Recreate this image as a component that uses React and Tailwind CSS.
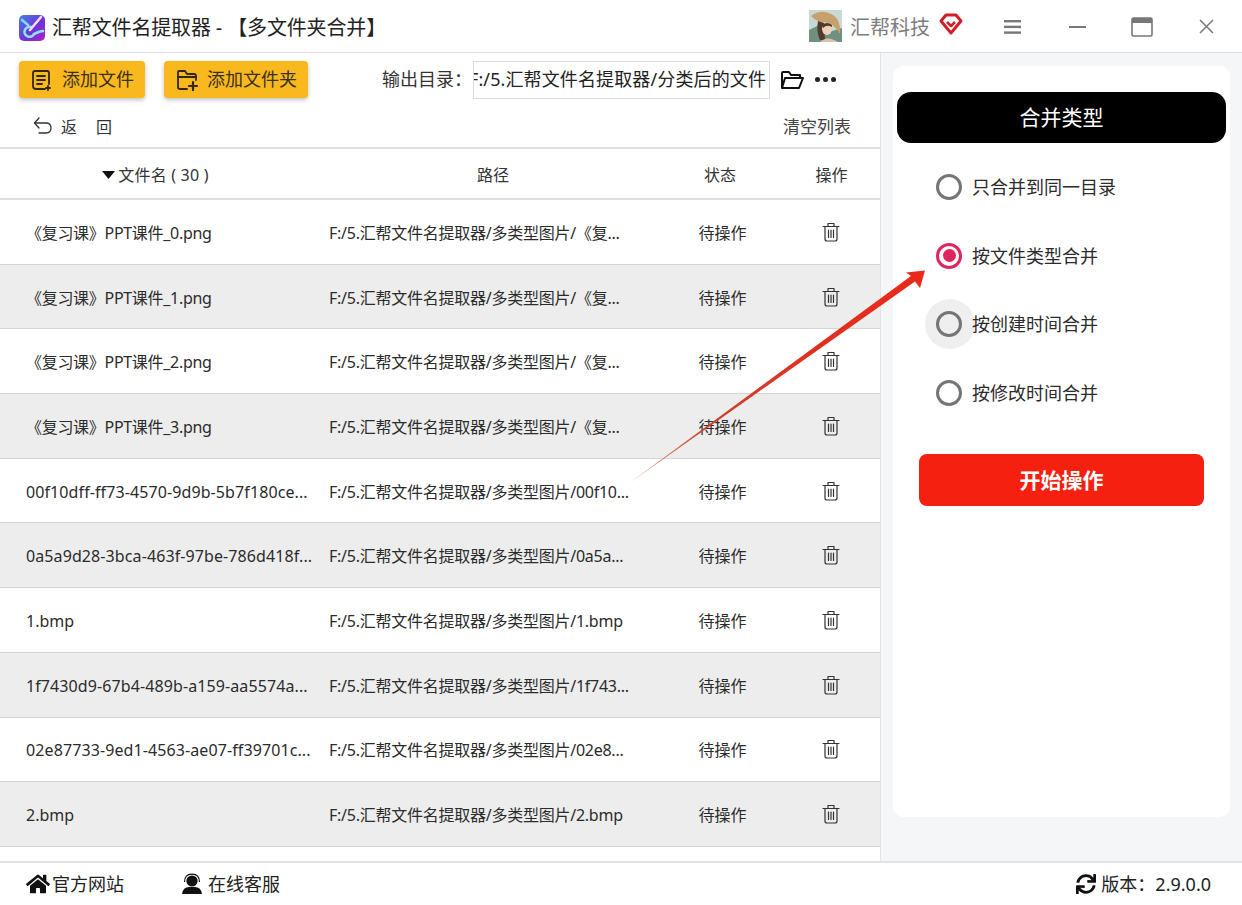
import React from "react";
import { FaHome, FaSync } from "react-icons/fa";

const rows = [
  ["《复习课》PPT课件_0.png", "F:/5.汇帮文件名提取器/多类型图片/《复...", "tracking-[-0.3px]"],
  ["《复习课》PPT课件_1.png", "F:/5.汇帮文件名提取器/多类型图片/《复...", "tracking-[-0.3px]"],
  ["《复习课》PPT课件_2.png", "F:/5.汇帮文件名提取器/多类型图片/《复...", "tracking-[-0.3px]"],
  ["《复习课》PPT课件_3.png", "F:/5.汇帮文件名提取器/多类型图片/《复...", "tracking-[-0.3px]"],
  ["00f10dff-ff73-4570-9d9b-5b7f180ce...", "F:/5.汇帮文件名提取器/多类型图片/00f10...", "tracking-[0.1px]"],
  ["0a5a9d28-3bca-463f-97be-786d418f...", "F:/5.汇帮文件名提取器/多类型图片/0a5a...", "tracking-[0.1px]"],
  ["1.bmp", "F:/5.汇帮文件名提取器/多类型图片/1.bmp", "tracking-normal"],
  ["1f7430d9-67b4-489b-a159-aa5574a...", "F:/5.汇帮文件名提取器/多类型图片/1f743...", "tracking-[0.1px]"],
  ["02e87733-9ed1-4563-ae07-ff39701c...", "F:/5.汇帮文件名提取器/多类型图片/02e8...", "tracking-[0.1px]"],
  ["2.bmp", "F:/5.汇帮文件名提取器/多类型图片/2.bmp", "tracking-normal"],
];

function Logo() {
  return (
    <svg width="26" height="26" viewBox="0 0 26 26">
      <defs>
        <linearGradient id="lg" x1="0" y1="0" x2="1" y2="1">
          <stop offset="0" stopColor="#4d7fe6" />
          <stop offset="0.55" stopColor="#6a35d8" />
          <stop offset="1" stopColor="#b022c8" />
        </linearGradient>
      </defs>
      <rect width="26" height="26" rx="5" fill="url(#lg)" />
      <path d="M12 12 a5 5 0 1 0 3 7 c3 -1 5 -3 9 -3" fill="none" stroke="#8fe3f5" strokeWidth="2.6" strokeLinecap="round" />
      <path d="M11 15 L22 2" stroke="#f6d8f0" strokeWidth="2.6" strokeLinecap="round" />
      <path d="M3 5 L9 10" stroke="#7fd8f2" strokeWidth="2.6" strokeLinecap="round" />
    </svg>
  );
}

function Avatar() {
  return (
    <svg width="33" height="32" viewBox="0 0 33 32">
      <rect width="33" height="32" fill="#c8d8d6" />
      <path d="M0 20 L10 15 L20 22 L33 18 V32 H0Z" fill="#70907f" />
      <path d="M2 6 Q12 -2 24 5 Q32 10 31 24 Q24 12 14 12 Q8 12 2 6Z" fill="#c9a06c" />
      <path d="M9 11 Q7 22 11 30 H16 L15 13Z" fill="#4f3a2c" />
      <ellipse cx="18" cy="19" rx="5" ry="6" fill="#edd0bb" />
      <path d="M13 15 Q18 11 23 15 L23 17 Q18 14 14 18Z" fill="#4f3a2c" />
      <path d="M11 32 Q18 25 29 32Z" fill="#dcc0aa" />
    </svg>
  );
}

function Trash() {
  return (
    <svg width="18" height="20" viewBox="0 0 18 20" fill="none" stroke="#333" strokeWidth="1.2" strokeLinecap="round" strokeLinejoin="round">
      <path d="M1 4.5 H17" />
      <path d="M6 4.5 V1.5 H12 V4.5" />
      <path d="M3 4.5 V17 Q3 19 5 19 H13 Q15 19 15 17 V4.5" />
      <path d="M6.5 8 V15.5 M9 8 V15.5 M11.5 8 V15.5" />
    </svg>
  );
}

function Radio({ label, checked }) {
  return (
    <div className="flex items-center h-[50px] pl-[39px]">
      <span className={`w-[26px] h-[26px] rounded-full border-[3px] flex items-center justify-center shrink-0 ${checked ? "border-[#e0245e]" : "border-[#757575]"}`}>
        {checked && <span className="w-[13px] h-[13px] rounded-full bg-[#e0245e]" />}
      </span>
      <span className="ml-[10px] pt-[1px] text-[18px] text-[#2b2b2b]">{label}</span>
    </div>
  );
}

export default function App() {
  return (
    <div className="relative w-[1242px] h-[905px] overflow-hidden bg-white flex flex-col text-[#222]" style={{ fontFamily: '"Noto Sans", "Noto Sans CJK SC", sans-serif' }}>
      {/* title bar */}
      <header className="h-[53px] shrink-0 flex items-center border-b border-[#dddddf] pl-[19px]">
        <div className="flex items-center mt-[3px]">
          <Logo />
          <span className="ml-[7px] text-[20px] tracking-[-0.15px] text-[#222]">汇帮文件名提取器 - 【多文件夹合并】</span>
        </div>
        <div className="ml-auto flex items-center h-full">
          <Avatar />
          <span className="ml-[8px] mt-[3px] text-[20px] text-[#7d7d7d]">汇帮科技</span>
          <svg className="ml-[9px] -mt-[5px]" width="24" height="24" viewBox="0 0 24 24" fill="none" stroke="#cf2027" strokeWidth="3" strokeLinejoin="round">
            <path d="M7 3 H17 L22 9 L12 21 L2 9Z" />
            <path d="M8 10 L12 14 L16 10" strokeWidth="2.6" />
          </svg>
          <svg className="ml-[41px] mt-[1px]" width="18" height="16" viewBox="0 0 18 16" fill="#777">
            <rect y="1" width="17" height="2.4" />
            <rect y="6.7" width="17" height="2.4" />
            <rect y="12.4" width="17" height="2.4" />
          </svg>
          <span className="ml-[47px] mt-[1px] w-[17px] h-[2px] bg-[#777]" />
          <svg className="ml-[45px] mt-[1px]" width="22" height="20" viewBox="0 0 22 20" fill="none">
            <rect x="1" y="1" width="20" height="18" rx="1.5" stroke="#777" strokeWidth="1.6" />
            <rect x="1" y="1" width="20" height="5" fill="#777" />
          </svg>
          <svg className="ml-[46px] mr-[28px] mt-[1px]" width="15" height="15" viewBox="0 0 15 15" stroke="#777" strokeWidth="1.5">
            <path d="M1 1 L14 14 M14 1 L1 14" />
          </svg>
        </div>
      </header>

      <div className="flex-1 flex min-h-0">
        {/* left */}
        <main className="w-[881px] shrink-0 flex flex-col border-r border-[#e3e4e6]">
          <div className="h-[52px] shrink-0 flex items-center pl-[19px] pt-[1px]">
            <button className="w-[126px] h-[37px] rounded-[4px] bg-[#f9b81d] shadow-[0_2px_4px_rgba(0,0,0,0.25)] flex items-center pl-[12px] text-[18px] text-[#3a3020]">
              <svg width="22" height="22" viewBox="0 0 22 22" fill="none" stroke="#33260c" strokeWidth="1.8" strokeLinecap="round" strokeLinejoin="round">
                <path d="M14 20 H5 Q2 20 2 17 V4 Q2 2 4 2 H16 Q18 2 18 4 V15" />
                <path d="M6 7 H14 M6 11 H14 M6 15 H11" />
                <path d="M17 17 V21 M15 19 H19" />
              </svg>
              <span className="ml-[9px]">添加文件</span>
            </button>
            <button className="ml-[19px] w-[144px] h-[37px] rounded-[4px] bg-[#f9b81d] shadow-[0_2px_4px_rgba(0,0,0,0.25)] flex items-center pl-[12px] text-[18px] text-[#3a3020]">
              <svg width="23" height="22" viewBox="0 0 23 22" fill="none" stroke="#33260c" strokeWidth="1.8" strokeLinecap="round" strokeLinejoin="round">
                <path d="M11 20 H4 Q2 20 2 18 V3 Q2 2 3 2 H9 L11 5 H18 Q20 5 20 7 V11" />
                <path d="M2 8 H20" />
                <path d="M17 13 V21 M13 17 H21" strokeWidth="2.2" />
              </svg>
              <span className="ml-[8px]">添加文件夹</span>
            </button>
            <span className="ml-[74px] text-[18px] text-[#333]">输出目录：</span>
            <div className="ml-[1px] w-[297px] h-[38px] border border-[#dcdcdc] overflow-hidden flex items-center justify-end pr-[3px] text-[18px] tracking-[0.12px] text-[#222] whitespace-nowrap">
              F:/5.汇帮文件名提取器/分类后的文件
            </div>
            <svg className="ml-[10px]" width="24" height="20" viewBox="0 0 24 20" fill="none" stroke="#111" strokeWidth="2" strokeLinejoin="round">
              <path d="M2 18 V3 Q2 2 3 2 H9 L11 5 H20 V8" />
              <path d="M2 18 L5 8 H23 L19 18Z" />
            </svg>
            <span className="ml-[11px] flex gap-[3px]">
              <span className="w-[5px] h-[5px] rounded-full bg-[#222]" />
              <span className="w-[5px] h-[5px] rounded-full bg-[#222]" />
              <span className="w-[5px] h-[5px] rounded-full bg-[#222]" />
            </span>
          </div>

          <div className="h-[44px] shrink-0 flex items-center pl-[33px] pr-[29px] border-b-2 border-[#dedede]">
            <svg width="20" height="20" viewBox="0 0 20 20" fill="none" stroke="#333" strokeWidth="1.3" strokeLinecap="round" strokeLinejoin="round">
              <path d="M6 2 L1.5 7 L6 12" />
              <path d="M1.5 7 H13 Q18 7 18 12 Q18 17 13 17 H6" />
            </svg>
            <span className="ml-[8px] pt-[2px] text-[16px] text-[#333] w-[35px]">返</span>
            <span className="pt-[2px] text-[16px] text-[#333]">回</span>
            <span className="ml-auto pt-[2px] text-[17px] text-[#444]">清空列表</span>
          </div>

          <div className="h-[51px] shrink-0 flex items-center border-b-2 border-[#dedede] pt-[2px] text-[16px] text-[#333]">
            <div className="w-[329px] flex items-center justify-center pr-[18px]">
              <svg width="13" height="8" viewBox="0 0 13 8" fill="#111"><path d="M0 0 H13 L6.5 8Z" /></svg>
              <span className="ml-[3px] tracking-[0.2px]">文件名 ( 30 )</span>
            </div>
            <div className="w-[328px] text-center">路径</div>
            <div className="w-[126px] text-center">状态</div>
            <div className="w-[97px] text-center">操作</div>
          </div>

          <div className="flex-1 min-h-0 overflow-hidden">
            {rows.map(([name, path, track], i) => (
              <div key={i} className={`h-[64.7px] flex items-center border-b border-[#d4d4d4] text-[16px] text-[#2b2b2b] ${i % 2 ? "bg-[#ededed]" : "bg-white"}`}>
                <div className={`w-[329px] pl-[26px] pt-[2px] whitespace-nowrap overflow-hidden ${track}`}>{name}</div>
                <div className="w-[328px] pt-[2px] whitespace-nowrap overflow-hidden tracking-[-0.25px]">{path}</div>
                <div className="w-[126px] pl-[5px] pt-[2px] text-center">待操作</div>
                <div className="w-[97px] pr-[2px] flex justify-center"><Trash /></div>
              </div>
            ))}
          </div>
        </main>

        {/* right */}
        <aside className="flex-1 bg-[#f5f6f8] pl-[12px] pr-[12px] pt-[13px] pb-[44px]">
          <div className="h-[751px] bg-white rounded-[10px] px-[4px] pt-[26px]">
            <div className="h-[51px] pt-[1px] rounded-[14px] bg-black text-white text-[21px] flex items-center justify-center">合并类型</div>
            <div className="mt-[19px] flex flex-col gap-[18.7px] relative">
              <Radio label="只合并到同一目录" />
              <Radio label="按文件类型合并" checked />
              <div className="relative">
                <span className="absolute left-[28px] top-0 w-[50px] h-[50px] rounded-full bg-[#efefef]" />
                <div className="relative"><Radio label="按创建时间合并" /></div>
              </div>
              <Radio label="按修改时间合并" />
            </div>
            <button className="mt-[36px] ml-[22px] w-[285px] h-[52px] pt-[1px] rounded-[8px] bg-[#f5200f] text-white text-[21px] font-bold">开始操作</button>
          </div>
        </aside>
      </div>

      {/* footer */}
      <footer className="absolute bottom-0 left-0 right-0 h-[44px] bg-white border-t-2 border-[#e2e3e5] flex items-center pl-[26px] pr-[31px] text-[18px] text-[#222]">
        <FaHome size={24} color="#111" />
        <span className="ml-[2px]">官方网站</span>
        <svg className="ml-[57px]" width="22" height="22" viewBox="0 0 22 22">
          <circle cx="11" cy="8" r="5.6" fill="#111" />
          <path d="M3.5 9 Q3.5 1.2 11 1.2 Q18.5 1.2 18.5 9" fill="none" stroke="#111" strokeWidth="1.2" />
          <path d="M1 21 Q2 14 8 14 H14 Q20 14 21 21Z" fill="#111" />
        </svg>
        <span className="ml-[5px]">在线客服</span>
        <FaSync className="ml-auto" size={20} color="#111" />
        <span className="ml-[5px]">版本：2.9.0.0</span>
      </footer>

      {/* red arrow annotation */}
      <svg className="absolute left-0 top-0 pointer-events-none" width="1242" height="905" viewBox="0 0 1242 905">
        <defs>
          <linearGradient id="ar" gradientUnits="userSpaceOnUse" x1="628" y1="484" x2="925" y2="270">
            <stop offset="0" stopColor="#e8a090" />
            <stop offset="0.25" stopColor="#c9452f" />
            <stop offset="0.6" stopColor="#e0301f" />
            <stop offset="1" stopColor="#ea2a1a" />
          </linearGradient>
        </defs>
        <polygon points="628,484 911,276 906,272.5 925,270.5 920,288 915,281.5" fill="url(#ar)" />
      </svg>
    </div>
  );
}
